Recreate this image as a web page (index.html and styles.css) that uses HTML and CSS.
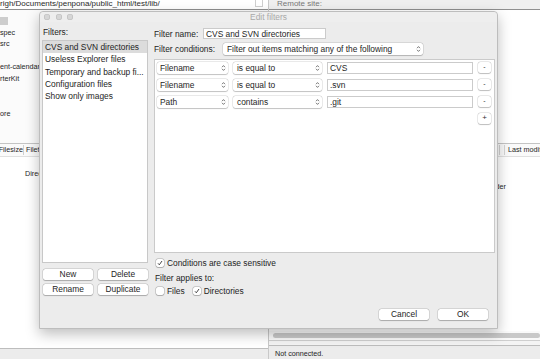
FILE: index.html
```html
<!DOCTYPE html>
<html>
<head>
<meta charset="utf-8">
<link rel="stylesheet" href="styles.css">
</head>
<body>
<div class="window">
  <section class="pane local">
    <div class="sitebar">
      <div class="path"><span>righ/Documents/penpona/public_html/test/lib/</span></div>
      <div class="drop"></div>
    </div>
    <div class="tree">
      <div class="node"><span class="sel"></span></div>
      <div class="node">spec</div>
      <div class="node">src</div>
      <div class="node"></div>
      <div class="node">ent-calendar</div>
      <div class="node">rterKit</div>
      <div class="node"></div>
      <div class="node"></div>
      <div class="node">ore</div>
    </div>
    <div class="listhead"><span class="hcell size"><span>Filesize</span></span><span class="hcell">Filetype</span></div>
    <div class="list local-list"><div class="row"><span class="type">Directory</span></div></div>
    <div class="status"></div>
  </section>
  <div class="split"></div>
  <section class="pane remote">
    <div class="sitebar">
      <div class="remote-label"><span>Remote site:</span></div>
    </div>
    <div class="tree"></div>
    <div class="listhead"><span class="hcell spacer"></span><span class="hcell tiny"></span><span class="hcell">Last modified</span></div>
    <div class="list remote-list"><div class="row"><span class="rtype">Folder</span></div></div>
    <div class="hscroll"><span class="bar"></span></div>
    <div class="gapline"></div>
    <div class="status remote-status">Not connected.</div>
  </section>
</div>

<div class="dialog">
  <div class="titlebar">
    <div class="lights"><i></i><i></i><i></i></div>
    <div class="title">Edit filters</div>
    <div></div>
  </div>
  <div class="dbody">
    <div class="leftcol">
      <div class="label filters-label">Filters:</div>
      <ul class="filterlist">
        <li class="selected">CVS and SVN directories</li>
        <li>Useless Explorer files</li>
        <li>Temporary and backup fi...</li>
        <li>Configuration files</li>
        <li>Show only images</li>
      </ul>
      <div class="lbtns">
        <div class="btn">New</div>
        <div class="btn">Delete</div>
        <div class="btn">Rename</div>
        <div class="btn">Duplicate</div>
      </div>
    </div>
    <div class="rightcol">
      <div class="frow name-row">
        <span class="flabel name-label">Filter name:</span>
        <div class="input name-input">CVS and SVN directories</div>
      </div>
      <div class="frow cond-row">
        <span class="flabel cond-label">Filter conditions:</span>
        <div class="select wide"><span>Filter out items matching any of the following</span><svg class="chev" viewBox="0 0 5 8" width="5" height="8"><path d="M1 3.2 2.5 1.6 4 3.2M1 4.8 2.5 6.4 4 4.8" fill="none" stroke="#555" stroke-width=".8"/></svg></div>
      </div>
      <div class="conds">
        <div class="cond">
          <div class="select"><span>Filename</span><svg class="chev" viewBox="0 0 5 8" width="5" height="8"><path d="M1 3.2 2.5 1.6 4 3.2M1 4.8 2.5 6.4 4 4.8" fill="none" stroke="#555" stroke-width=".8"/></svg></div>
          <div class="select op"><span>is equal to</span><svg class="chev" viewBox="0 0 5 8" width="5" height="8"><path d="M1 3.2 2.5 1.6 4 3.2M1 4.8 2.5 6.4 4 4.8" fill="none" stroke="#555" stroke-width=".8"/></svg></div>
          <div class="input val">CVS</div>
          <div class="mini">-</div>
        </div>
        <div class="cond">
          <div class="select"><span>Filename</span><svg class="chev" viewBox="0 0 5 8" width="5" height="8"><path d="M1 3.2 2.5 1.6 4 3.2M1 4.8 2.5 6.4 4 4.8" fill="none" stroke="#555" stroke-width=".8"/></svg></div>
          <div class="select op"><span>is equal to</span><svg class="chev" viewBox="0 0 5 8" width="5" height="8"><path d="M1 3.2 2.5 1.6 4 3.2M1 4.8 2.5 6.4 4 4.8" fill="none" stroke="#555" stroke-width=".8"/></svg></div>
          <div class="input val">.svn</div>
          <div class="mini">-</div>
        </div>
        <div class="cond">
          <div class="select"><span>Path</span><svg class="chev" viewBox="0 0 5 8" width="5" height="8"><path d="M1 3.2 2.5 1.6 4 3.2M1 4.8 2.5 6.4 4 4.8" fill="none" stroke="#555" stroke-width=".8"/></svg></div>
          <div class="select op"><span>contains</span><svg class="chev" viewBox="0 0 5 8" width="5" height="8"><path d="M1 3.2 2.5 1.6 4 3.2M1 4.8 2.5 6.4 4 4.8" fill="none" stroke="#555" stroke-width=".8"/></svg></div>
          <div class="input val">.git</div>
          <div class="mini">-</div>
        </div>
        <div class="cond add-row">
          <div class="mini plus">+</div>
        </div>
      </div>
      <div class="check case-row"><span class="box on"><svg viewBox="0 0 8 8" width="8" height="8"><path d="M2 4.3 3.3 5.8 6 2" fill="none" stroke="#333" stroke-width=".9"/></svg></span>Conditions are case sensitive</div>
      <div class="label applies-label">Filter applies to:</div>
      <div class="applies">
        <span class="check"><span class="box"></span>Files</span>
        <span class="check"><span class="box on"><svg viewBox="0 0 8 8" width="8" height="8"><path d="M2 4.3 3.3 5.8 6 2" fill="none" stroke="#333" stroke-width=".9"/></svg></span>Directories</span>
      </div>
      <div class="actions">
        <div class="btn act">Cancel</div>
        <div class="btn act">OK</div>
      </div>
    </div>
  </div>
</div>
</body>
</html>
```

FILE: styles.css
```css
* { box-sizing: border-box; }
html, body { margin: 0; padding: 0; }
body {
  width: 540px;
  height: 359px;
  overflow: hidden;
  position: relative;
  font-family: "Liberation Sans", Arial, sans-serif;
  font-size: 8.4px;
  color: #1e1e1e;
  background: #fff;
}

/* ---------- background main window ---------- */
.window {
  display: grid;
  grid-template-columns: 268px 1px 1fr;
  height: 359px;
  font-size: 7.2px;
}
.split { background: #c9c9c9; }
.pane {
  display: flex;
  flex-direction: column;
  min-width: 0;
  overflow: hidden;
}
.sitebar {
  height: 10px;
  flex: none;
  border-bottom: 1px solid #8f8f8f;
  display: flex;
  overflow: hidden;
}
.local .sitebar { background: #fff; }
.path {
  flex: 1;
  overflow: hidden;
  white-space: nowrap;
  line-height: 9px;
  color: #2a2a2a;
  font-size: 8px;
}
.path span { display: block; margin-top: -1px; }
.drop {
  width: 8px;
  height: 7px;
  margin: 0 5px 0 3px;
  background: #fff;
  border: 1px solid #cfcfcf;
  border-top: none;
}
.remote .sitebar { background: #efefef; }
.remote-label {
  flex: 1;
  line-height: 9px;
  padding-left: 8px;
  color: #777;
  overflow: hidden;
  font-size: 8px;
}
.remote-label span { display: block; margin-top: -1px; }

.tree {
  height: 133px;
  flex: none;
  padding-top: 5px;
  background: #fbfbfb;
}
.remote .tree { background: #fff; }
.node {
  height: 11.6px;
  line-height: 11.6px;
  white-space: nowrap;
}
.sel {
  display: inline-block;
  width: 8px;
  height: 8px;
  background: #cdcdcd;
  vertical-align: middle;
}

.listhead {
  height: 14px;
  flex: none;
  display: flex;
  align-items: center;
  border-top: 1px solid #c4c4c4;
  border-bottom: 1px solid #e0e0e0;
  background: #fafafa;
  white-space: nowrap;
}
.hcell { flex: none; line-height: 10px; padding-left: 2px; }
.hcell.size {
  width: 24px;
  padding-left: 0;
  display: flex;
  justify-content: flex-end;
  overflow: hidden;
  border-right: 1px solid #cfcfcf;
}
.hcell.spacer { width: 231px; padding: 0; height: 10px; border-right: 1px solid #cfcfcf; }
.hcell.tiny { width: 5px; height: 10px; padding: 0; border-right: 1px solid #d6d6d6; margin-right: 1px; }
.list { flex: 1; background: #fff; white-space: nowrap; }
.local-list { padding-top: 11px; }
.local-list .row { padding-left: 25px; line-height: 12px; }
.remote-list { padding-top: 24px; }
.remote-list .row { width: 237px; text-align: right; line-height: 12px; }

.status {
  height: 11px;
  flex: none;
  border-top: 1px solid #bdbdbd;
  background: #ececec;
}
.hscroll {
  height: 9px;
  flex: none;
  padding: 2px 0 0 4px;
  background: #fafafa;
}
.hscroll .bar {
  display: block;
  height: 5px;
  border-radius: 3px;
  background: #c9c9c9;
}
.gapline {
  height: 5px;
  flex: none;
  border-top: 1px solid #cfcfcf;
  background: #f4f4f4;
}
.remote-status {
  height: 14px;
  padding: 2px 0 0 6px;
  line-height: 12px;
  color: #1e1e1e;
}

/* ---------- dialog ---------- */
.dialog {
  position: absolute;
  left: 39px;
  top: 11px;
  width: 459px;
  height: 318px;
  background: #ececec;
  border: 1px solid #bdbdbd;
  border-radius: 4px 4px 0 0;
  box-shadow: 0 5px 14px rgba(0, 0, 0, 0.26);
  display: flex;
  flex-direction: column;
}
.titlebar {
  height: 10px;
  flex: none;
  display: grid;
  grid-template-columns: 1fr auto 1fr;
  align-items: center;
  background: #eeeeee;
  border-radius: 4px 4px 0 0;
}
.lights { display: flex; gap: 5.5px; padding-left: 4px; }
.lights i {
  display: block;
  width: 6px;
  height: 6px;
  border-radius: 50%;
  background: #d6d6d6;
  box-shadow: inset 0 0 0 0.6px #bebebe;
}
.title { color: #a9a9a9; line-height: 10px; }

.dbody {
  flex: 1;
  display: grid;
  grid-template-columns: 106px 341px;
  column-gap: 6px;
  padding: 0 2px;
}
.leftcol, .rightcol { display: flex; flex-direction: column; min-width: 0; }
.label { height: 10px; line-height: 10px; white-space: nowrap; }
.filters-label { margin-top: 5px; padding-left: 1px; }
.filterlist {
  margin: 3px 0 0;
  padding: 0;
  list-style: none;
  height: 223px;
  background: #fff;
  border: 1px solid #c8c8c8;
}
.filterlist li {
  height: 12.3px;
  line-height: 12.3px;
  padding-left: 2px;
  white-space: nowrap;
  overflow: hidden;
}
.filterlist li.selected { background: #dcdcdc; }

.btn {
  height: 11px;
  line-height: 11px;
  text-align: center;
  background: #fff;
  border-radius: 2.5px;
  box-shadow: 0 0 0 0.5px rgba(0, 0, 0, 0.16), 0 0.6px 1px rgba(0, 0, 0, 0.22);
  white-space: nowrap;
}
.lbtns {
  margin-top: 6px;
  display: grid;
  grid-template-columns: 1fr 1fr;
  gap: 4px 5px;
  padding: 0 0 0 1px;
}

.frow { display: flex; align-items: center; white-space: nowrap; }
.flabel { flex: none; }
.name-row { margin-top: 6px; height: 11px; }
.name-label { width: 49px; }
.cond-row { margin-top: 4px; height: 12px; }
.cond-label { width: 69px; }

.input {
  background: #fff;
  border: 1px solid #cbcbcb;
  height: 100%;
  display: flex;
  align-items: center;
  padding-left: 2px;
  white-space: nowrap;
  overflow: hidden;
}
.name-input { width: 123px; }
.select {
  display: flex;
  align-items: center;
  justify-content: space-between;
  background: #fff;
  border-radius: 2.5px;
  box-shadow: 0 0 0 0.5px rgba(0, 0, 0, 0.14), 0 0.6px 1px rgba(0, 0, 0, 0.18);
  padding: 0 2px 0 3px;
  height: 100%;
  white-space: nowrap;
  overflow: hidden;
}
.select.wide { width: 200px; padding-left: 4px; }
.select.op { padding-left: 4px; }
.chev { flex: none; }

.conds {
  margin-top: 4px;
  height: 194px;
  background: #fff;
  border: 1px solid #cacaca;
  padding: 2px 3px 0 2px;
}
.cond {
  display: grid;
  grid-template-columns: 71px 89px 146px 13px;
  column-gap: 5px;
  height: 12px;
  margin-bottom: 5px;
}
.cond .input { padding-left: 2px; }
.mini {
  height: 11px;
  line-height: 10px;
  text-align: center;
  background: #fff;
  border-radius: 2.5px;
  box-shadow: 0 0 0 0.5px rgba(0, 0, 0, 0.14), 0 0.6px 1px rgba(0, 0, 0, 0.2);
  color: #333;
  font-size: 7px;
}
.add-row { height: 11px; }
.plus { grid-column: 4; font-size: 8px; }

.check { display: flex; align-items: center; white-space: nowrap; }
.box {
  width: 8px;
  height: 8px;
  flex: none;
  background: #fff;
  border-radius: 2px;
  box-shadow: 0 0 0 0.5px rgba(0, 0, 0, 0.28), 0 0.5px 0.8px rgba(0, 0, 0, 0.15);
  margin: 0 3px 0 2px;
  display: flex;
}
.case-row { margin-top: 5px; height: 10px; }
.applies-label { margin-top: 5px; padding-left: 1px; }
.applies { margin-top: 3px; height: 10px; display: flex; gap: 6px; }

.actions {
  margin-top: 13px;
  display: flex;
  justify-content: flex-end;
  gap: 9px;
  padding-right: 7px;
}
.btn.act { width: 50px; }
```
